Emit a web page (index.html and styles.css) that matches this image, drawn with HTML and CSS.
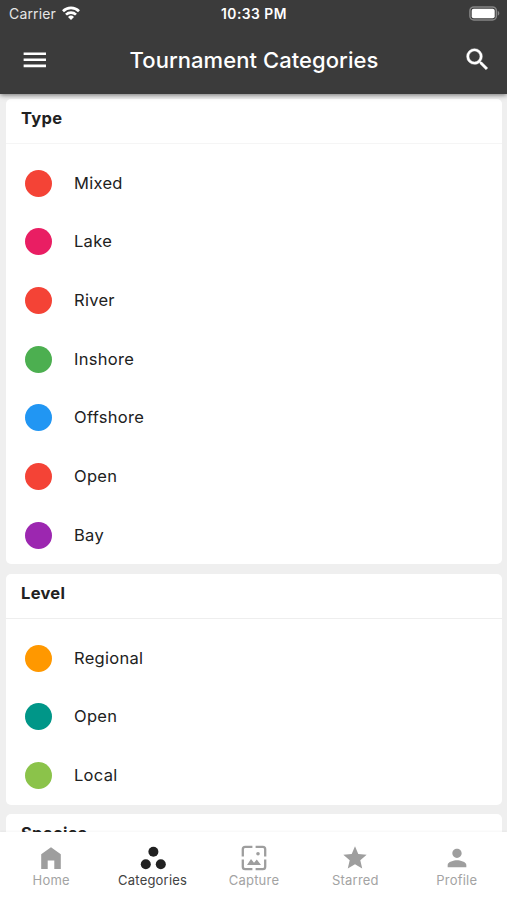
FILE: index.html
```html
<!DOCTYPE html>
<html lang="en">
<head>
<meta charset="utf-8">
<title>Tournament Categories</title>
<link rel="stylesheet" href="styles.css">
</head>
<body>
<div class="app">
  <header class="header">
    <div class="status">
      <div class="carrier"><span class="carrier-name">Carrier</span>
        <svg class="wifi" viewBox="0 0 18 14"><g fill="none" stroke="#fff" stroke-width="2.7"><path d="M1 5.2a11.4 11.4 0 0 1 16 0"/><path d="M4 8.6a7.1 7.1 0 0 1 10 0"/></g><path fill="#fff" d="M6 10.9a4.3 4.3 0 0 1 6 0L9 14z"/></svg>
      </div>
      <span class="time">10:33 PM</span>
      <svg class="battery" viewBox="0 0 31 15"><rect x=".9" y=".9" width="26.5" height="13" rx="4" fill="none" stroke="#858585" stroke-width="1.5"/><rect x="2.7" y="2.7" width="23" height="9.5" rx="2" fill="#fff"/><path fill="#858585" d="M28.8 5c2 .6 2 4 0 4.6z"/></svg>
    </div>
    <div class="toolbar">
      <svg class="icon" viewBox="0 0 24 24"><path d="M3 17.5h18.5v-2.2H3v2.2zm0-5h18.5v-2.2H3v2.2zm0-7.2v2.2h18.5V5.3H3z"/></svg>
      <h1 class="title">Tournament Categories</h1>
      <svg class="icon" viewBox="0 0 24 24"><path stroke="#fff" stroke-width=".35" d="M15.5 13.2h-.79l-.28-.27A6.471 6.471 0 0 0 16 8.7 6.5 6.5 0 1 0 9.5 15.2c1.61 0 3.09-.59 4.23-1.57l.27.28v.79l5 4.99L20.49 18.2l-4.99-5zm-6 0C7.01 13.2 5 11.19 5 8.7S7.01 4.2 9.5 4.2 14 6.21 14 8.7 11.99 13.2 9.5 13.2z"/></svg>
    </div>
  </header>
  <main class="content">
    <section class="card first">
      <h2 class="card-title">Type</h2>
      <ul class="list">
        <li class="row"><span class="dot red"></span><span class="label">Mixed</span></li>
        <li class="row"><span class="dot pink"></span><span class="label">Lake</span></li>
        <li class="row"><span class="dot red"></span><span class="label">River</span></li>
        <li class="row"><span class="dot green"></span><span class="label">Inshore</span></li>
        <li class="row"><span class="dot blue"></span><span class="label">Offshore</span></li>
        <li class="row"><span class="dot red"></span><span class="label">Open</span></li>
        <li class="row"><span class="dot purple"></span><span class="label">Bay</span></li>
      </ul>
    </section>
    <section class="card">
      <h2 class="card-title">Level</h2>
      <ul class="list">
        <li class="row"><span class="dot orange"></span><span class="label">Regional</span></li>
        <li class="row"><span class="dot teal"></span><span class="label">Open</span></li>
        <li class="row"><span class="dot lime"></span><span class="label">Local</span></li>
      </ul>
    </section>
    <section class="card">
      <h2 class="card-title">Species</h2>
    </section>
  </main>
  <nav class="tabs">
    <a class="tab"><svg class="tab-icon" viewBox="0 0 28 28"><path d="M14 3.2 4.2 10.3V25H10.7V16.5H17.3V25H23.8V10.3z"/></svg><span>Home</span></a>
    <a class="tab active"><svg class="tab-icon" viewBox="0 0 28 28"><circle cx="14.4" cy="7.8" r="5"/><circle cx="6.8" cy="20.2" r="5"/><circle cx="21.8" cy="20.2" r="5"/></svg><span>Categories</span></a>
    <a class="tab"><svg class="tab-icon" viewBox="0 0 28 28"><path fill="none" stroke="#9e9e9e" stroke-width="2.3" d="M2.8 12.4V5.2q0-2.4 2.4-2.4h7.2M15.6 2.8h7.2q2.4 0 2.4 2.4v7.2M25.2 15.6v7.2q0 2.4-2.4 2.4h-7.2M12.4 25.2H5.2q-2.4 0-2.4-2.4v-7.2"/><path d="m7 21 4-6 3 3.8 2.8-3.3L21 21z"/><circle cx="18" cy="9.8" r="1.8"/></svg><span>Capture</span></a>
    <a class="tab"><svg class="tab-icon" viewBox="0 0 24 24"><path d="M12 17.27 18.18 21l-1.64-7.03L22 9.24l-7.19-.61L12 2 9.19 8.63 2 9.24l5.46 4.73L5.82 21z"/></svg><span>Starred</span></a>
    <a class="tab"><svg class="tab-icon" viewBox="0 0 24 24"><path d="M12 12c2.21 0 4-1.79 4-4s-1.79-4-4-4-4 1.79-4 4 1.79 4 4 4zm0 2c-2.67 0-8 1.34-8 4v2h16v-2c0-2.66-5.33-4-8-4z"/></svg><span>Profile</span></a>
  </nav>
</div>
</body>
</html>
```
FILE: styles.css
```css
* { box-sizing: border-box; }
body { margin: 0; font-family: Inter, "Liberation Sans", sans-serif; color: #212121; }
.app { height: 900px; display: flex; flex-direction: column; overflow: hidden; background: #efefef; }
.header { height: 94px; flex: none; background: #3b3b3b; color: #fff; box-shadow: 0 1px 5px rgba(0,0,0,.55); z-index: 1; }
.status { height: 27px; padding: 0 7px 0 9px; display: grid; grid-template-columns: 1fr auto 1fr; align-items: center; }
.carrier { display: flex; align-items: center; gap: 6px; font-size: 14px; letter-spacing: .15px; color: #e6e6e6; }
.wifi { width: 18px; height: 14px; margin-bottom: 1px; }
.time { margin-right: 1px; font-size: 14px; font-weight: 600; letter-spacing: .45px; }
.time { letter-spacing: .5px; font-size: 13.8px; }
.battery { width: 31px; height: 15px; justify-self: end; }
.toolbar { height: 66px; padding: 0 15px 0 20px; display: flex; align-items: center; justify-content: space-between; }
.icon { width: 29px; height: 29px; fill: #fff; }
.title { margin: 0 4px 0 0; font-size: 22px; font-weight: 500; letter-spacing: .06px; }
.content { flex: 1; min-height: 0; overflow: hidden; padding: 5px 5px 0 6px; display: flex; flex-direction: column; gap: 9.5px; }
.card { flex: none; background: #fff; border-radius: 5px; }
.card-title { margin: 0; height: 45px; padding: 9px 15px 0; border-bottom: 1px solid #eee; font-size: 16.5px; line-height: 21px; font-weight: 700; letter-spacing: .3px; }
.first .card-title { border-bottom-color: #f5f5f5; }
.list { margin: 0; padding: 10px 0 0; list-style: none; }
.row { height: 58.65px; padding-left: 19.3px; display: flex; align-items: center; gap: 21.7px; }
.dot { width: 27px; height: 27px; border-radius: 50%; }
.label { padding-bottom: 1px; font-size: 16.5px; letter-spacing: .3px; }
.red { background: #f44336; }
.pink { background: #e91e63; }
.green { background: #4caf50; }
.blue { background: #2196f3; }
.purple { background: #9c27b0; }
.orange { background: #ff9800; }
.teal { background: #009688; }
.lime { background: #8bc34a; }
.tabs { height: 68px; flex: none; background: #fff; display: grid; grid-template-columns: repeat(5, 1fr); box-shadow: 0 -1px 2px rgba(0,0,0,.04); z-index: 1; }
.tab { display: flex; flex-direction: column; align-items: center; padding: 12px 0 0 1px; color: #a3a3a3; fill: #9e9e9e; font-size: 13px; line-height: 17px; letter-spacing: .2px; }
.tab-icon { width: 28px; height: 28px; }
.active { color: #424242; fill: #212121; }
```
